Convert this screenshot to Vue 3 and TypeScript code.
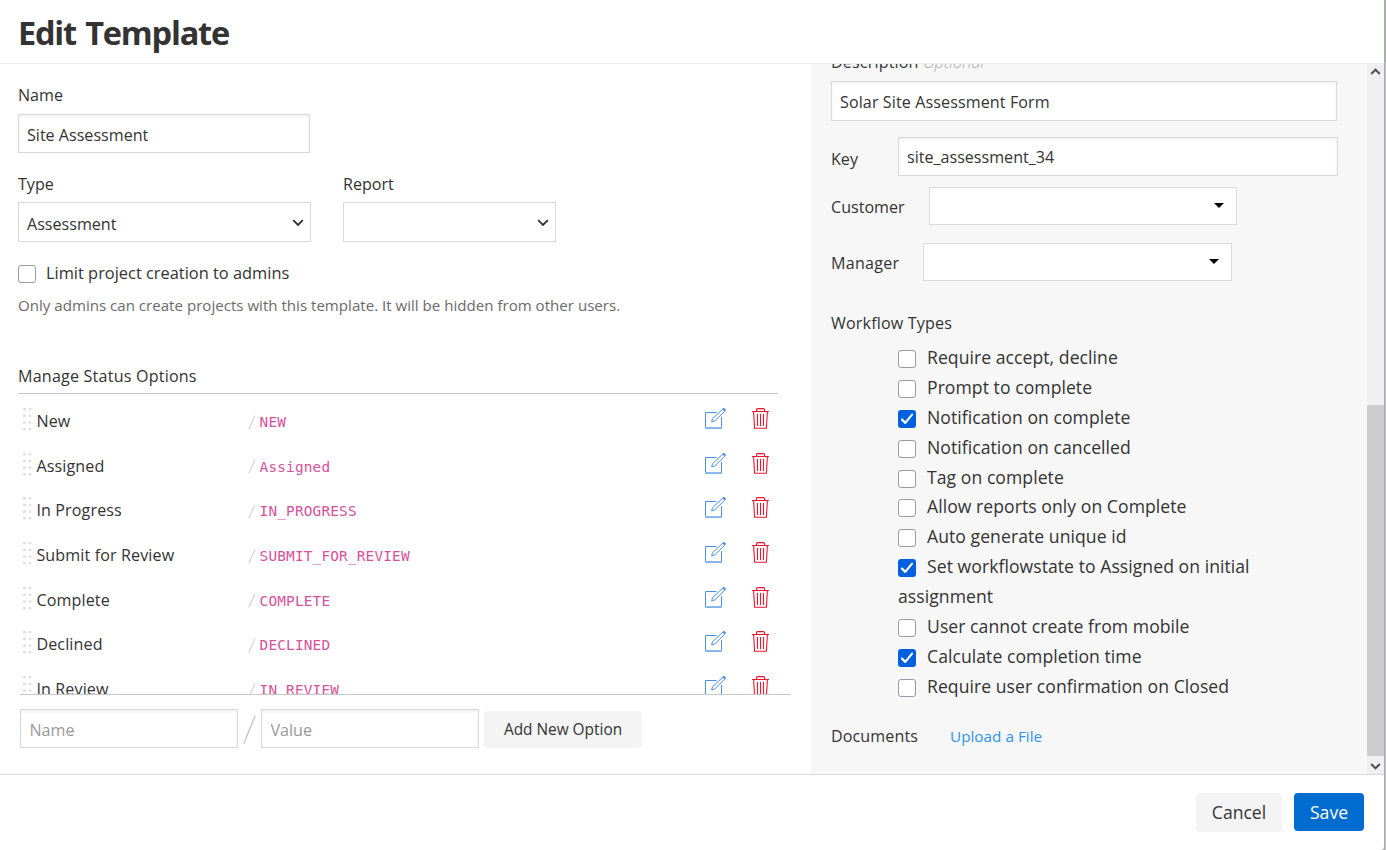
<script setup lang="ts">
import { ref } from 'vue'

interface StatusOption {
  label: string
  value: string
}

interface WorkflowType {
  label: string
  checked: boolean
}

const statuses = ref<StatusOption[]>([
  { label: 'New', value: 'NEW' },
  { label: 'Assigned', value: 'Assigned' },
  { label: 'In Progress', value: 'IN_PROGRESS' },
  { label: 'Submit for Review', value: 'SUBMIT_FOR_REVIEW' },
  { label: 'Complete', value: 'COMPLETE' },
  { label: 'Declined', value: 'DECLINED' },
  { label: 'In Review', value: 'IN_REVIEW' },
])

const workflowTypes = ref<WorkflowType[]>([
  { label: 'Require accept, decline', checked: false },
  { label: 'Prompt to complete', checked: false },
  { label: 'Notification on complete', checked: true },
  { label: 'Notification on cancelled', checked: false },
  { label: 'Tag on complete', checked: false },
  { label: 'Allow reports only on Complete', checked: false },
  { label: 'Auto generate unique id', checked: false },
  { label: 'Set workflowstate to Assigned on initial assignment', checked: true },
  { label: 'User cannot create from mobile', checked: false },
  { label: 'Calculate completion time', checked: true },
  { label: 'Require user confirmation on Closed', checked: false },
])

const name = ref('Site Assessment')
const description = ref('Solar Site Assessment Form')
const templateKey = ref('site_assessment_34')
const adminsOnly = ref(false)
</script>

<template>
  <div class="screen">
    <div class="dialog">
      <header class="head"><h1>Edit Template</h1></header>

      <div class="body">
        <section class="main">
          <label class="lbl name-lbl">Name</label>
          <input v-model="name" class="field name-field" type="text" />

          <div class="selects">
            <div class="col type-col">
              <label class="lbl">Type</label>
              <div class="select">
                <span>Assessment</span>
                <svg width="12" height="8" viewBox="0 0 12 8"><path d="M1.2 1.2 6 6l4.8-4.8" /></svg>
              </div>
            </div>
            <div class="col report-col">
              <label class="lbl">Report</label>
              <div class="select">
                <span></span>
                <svg width="12" height="8" viewBox="0 0 12 8"><path d="M1.2 1.2 6 6l4.8-4.8" /></svg>
              </div>
            </div>
          </div>

          <label class="limit">
            <input v-model="adminsOnly" type="checkbox" class="sr" />
            <span class="box"></span>
            <span class="limit-text">Limit project creation to admins</span>
          </label>
          <p class="hint">Only admins can create projects with this template. It will be hidden from other users.</p>

          <h2 class="lbl manage">Manage Status Options</h2>
          <div class="list">
            <div v-for="s in statuses" :key="s.value" class="row">
              <svg class="grip" width="9" height="23" viewBox="0 0 9 23">
                <g v-for="y in [0, 6.7, 13.4, 20]" :key="y">
                  <rect x="0" :y="y" width="3" height="2.4" />
                  <rect x="5.7" :y="y" width="2.6" height="2.4" />
                </g>
              </svg>
              <span class="row-name">{{ s.label }}</span>
              <svg class="slash" width="8" height="15" viewBox="0 0 8 15"><path d="M.8 14.5 7 .5" /></svg>
              <code>{{ s.value }}</code>
              <svg class="edit" width="21" height="21" viewBox="0 0 21 21">
                <path d="M11.5 4.5H.5v15.8h16V9.2" />
                <path class="base" d="M0 19.8h17" />
                <path class="pencil" d="M6.6 13.9l1-3.3L17.9 1l2 2L9.8 12.9z" />
                <path class="tip" d="M17.9.9l1-.7 1.6 1.6-.9 1.2z" />
              </svg>
              <svg class="trash" width="17" height="21" viewBox="0 0 17 21">
                <path d="M0 3.5h17M4.5 3.3V1.6Q4.5.6 5.5.6h6q1 0 1 1v1.7M1.6 3.5l1 16.8h11.8l1-16.8M5.5 6v12M8.5 6v12M11.5 6v12" />
              </svg>
            </div>
          </div>

          <div class="adder">
            <input class="field" type="text" placeholder="Name" />
            <svg class="big-slash" width="13" height="29" viewBox="0 0 13 29"><path d="M.8 28.5 12.2.5" /></svg>
            <input class="field" type="text" placeholder="Value" />
            <button class="btn add">Add New Option</button>
          </div>
        </section>

        <aside class="side">
          <div class="pane">
            <label class="lbl desc-lbl">Description <em>Optional</em></label>
            <input v-model="description" class="field desc-field" type="text" />
            <div class="pair key">
              <label class="lbl">Key</label>
              <input v-model="templateKey" class="field" type="text" />
            </div>
            <div class="pair customer">
              <label class="lbl">Customer</label>
              <div class="combo"><i></i></div>
            </div>
            <div class="pair manager">
              <label class="lbl">Manager</label>
              <div class="combo"><i></i></div>
            </div>
            <h2 class="lbl wf-title">Workflow Types</h2>
            <ul class="wf">
              <li v-for="w in workflowTypes" :key="w.label">
                <label>
                  <input v-model="w.checked" type="checkbox" class="sr" />
                  <span class="box" :class="{ on: w.checked }">
                    <svg v-if="w.checked" width="18" height="18" viewBox="0 0 18 18"><path d="M4 9.6l3.3 3.3L14 4.6" /></svg>
                  </span>{{ w.label }}
                </label>
              </li>
            </ul>
            <div class="docs">
              <span class="lbl">Documents</span>
              <a>Upload a File</a>
            </div>
          </div>
          <div class="scrollbar">
            <svg width="11" height="7" viewBox="0 0 11 7"><path d="M1.2 6 5.5 1.7 9.8 6" /></svg>
            <div class="thumb"></div>
            <svg width="11" height="7" viewBox="0 0 11 7"><path d="M1.2 1 5.5 5.3 9.8 1" /></svg>
          </div>
        </aside>
      </div>

      <footer class="foot">
        <button class="btn cancel">Cancel</button>
        <button class="btn save">Save</button>
      </footer>
    </div>
    <div class="backdrop"></div>
  </div>
</template>

<style>
html,
body {
  overflow: hidden;
}
</style>

<style scoped>
* {
  box-sizing: border-box;
}
.screen {
  display: flex;
  width: 1386px;
  height: 850px;
  background: #c0c0c0;
  color: #333;
  font-family: 'Open Sans', 'Noto Sans', sans-serif;
  font-size: 16.1px;
  line-height: 24px;
}
.dialog {
  width: 1384px;
  height: 850px;
  display: flex;
  flex-direction: column;
  background: #fff;
  border-bottom-right-radius: 4px;
}
.backdrop {
  width: 2px;
  height: 850px;
  border-left: 1px solid #ababab;
  background: linear-gradient(#a5bba9 62px, #c2c2c4 62px);
}
.head {
  height: 64px;
  flex: none;
  padding: 11px 0 0 18px;
  border-bottom: 1px solid #eee;
}
h1 {
  margin: 0;
  font-size: 32.5px;
  font-weight: 700;
  line-height: 44px;
  letter-spacing: -1.2px;
  word-spacing: 2px;
}
.body {
  display: flex;
  height: 710px;
  flex: none;
}
.main {
  width: 811px;
  padding: 19px 0 0 18px;
}
.lbl {
  display: block;
  margin: 0;
  font-size: 16.1px;
  font-weight: 400;
  line-height: 24px;
  white-space: nowrap;
}
.field {
  display: block;
  height: 39px;
  margin: 0;
  padding: 3px 8px 0;
  border: 1px solid #d9d9d9;
  border-radius: 0;
  background: #fff;
  box-shadow: inset 0 2px 3px rgba(0, 0, 0, 0.06);
  color: #333;
  font-family: inherit;
  font-size: 16.1px;
  outline: none;
}
.field::placeholder {
  color: #999;
  opacity: 1;
}
.name-field {
  width: 292px;
  margin-top: 7px;
}
.selects {
  display: flex;
  gap: 32px;
  margin-top: 19px;
}
.type-col {
  width: 293px;
}
.report-col {
  width: 213px;
}
.select {
  display: flex;
  align-items: center;
  justify-content: space-between;
  height: 40px;
  margin-top: 6px;
  padding: 3px 6px 0 8px;
  border: 1px solid #d9d9d9;
  background: #fff;
}
.select svg {
  margin-top: -2px;
}
.select path {
  fill: none;
  stroke: #333;
  stroke-width: 1.9;
}
.limit {
  display: flex;
  margin-top: 19px;
}
.limit .box {
  margin: 4.3px 0 -4.3px;
}
.limit-text {
  margin-left: 10px;
  font-size: 16.4px;
}
.sr {
  display: none;
}
.box {
  display: inline-block;
  width: 18px;
  height: 18px;
  border: 1px solid #9a99a6;
  border-radius: 3px;
  background: #fff;
}
.box.on {
  border: 0;
  background: #0060df;
}
.box svg {
  display: block;
}
.box path {
  fill: none;
  stroke: #fff;
  stroke-width: 2.2;
  stroke-linecap: round;
  stroke-linejoin: round;
}
.hint {
  margin: 8px 0 0;
  color: #6a6a6a;
  font-size: 15.1px;
  line-height: 24px;
  white-space: nowrap;
}
.manage {
  width: 760px;
  height: 30px;
  margin-top: 47px;
  border-bottom: 1px solid #c8c8c8;
  letter-spacing: 0.2px;
}
.list {
  width: 771px;
  height: 301px;
  margin-left: 2px;
  padding-top: 2.3px;
  overflow: hidden;
  border-bottom: 1px solid #c8c8c8;
}
.row {
  display: flex;
  align-items: center;
  height: 44.67px;
}
.grip {
  flex: none;
  margin: 2px 5px 0 3px;
  fill: #e0e0e0;
}
.row-name {
  width: 212px;
  margin-left: -0.6px;
  padding-top: 5px;
  letter-spacing: 0.12px;
}
.slash,
.big-slash {
  flex: none;
  fill: none;
  stroke: #d4d4d4;
  stroke-width: 1.2;
}
.slash {
  margin: 7px 0 0 -0.7px;
}
code {
  width: 445.3px;
  margin-left: 3.9px;
  padding-top: 7px;
  color: #d6519c;
  font-family: 'DejaVu Sans Mono', monospace;
  font-size: 14.4px;
  letter-spacing: 0.17px;
}
.edit,
.trash {
  flex: none;
  fill: none;
}
.edit {
  stroke: #4a90e2;
  stroke-width: 1;
}
.edit .base {
  stroke: #8fbbee;
  stroke-width: 1.6;
}
.edit .tip {
  fill: #4a90e2;
}
.trash {
  margin-left: 26px;
  stroke: #f0142f;
  stroke-width: 1.1;
}
.adder {
  display: flex;
  align-items: center;
  margin: 14px 0 0 2px;
}
.adder .field {
  width: 218px;
  padding-left: 8.5px;
}
.big-slash {
  margin: 2px 5px 0;
  stroke: #c8c8c8;
  stroke-width: 1.5;
}
.btn {
  height: 38px;
  margin: 0;
  padding: 0;
  border: 0;
  border-radius: 4px;
  background: #f4f4f4;
  color: #333;
  font-family: inherit;
  font-size: 17.6px;
}
.btn.add {
  width: 158px;
  height: 37px;
  margin: 2px 0 0 5px;
  padding-bottom: 1px;
  font-size: 15.4px;
}
.side {
  display: flex;
  width: 573px;
  background: #f7f7f7;
}
.pane {
  width: 556px;
  padding-left: 20px;
  overflow: hidden;
}
.desc-lbl {
  margin-top: -14px;
  letter-spacing: 0.15px;
}
.desc-lbl em {
  color: #aaa;
  font-weight: 300;
}
.desc-field {
  width: 506px;
  height: 40px;
  margin-top: 7px;
  padding-top: 2px;
  letter-spacing: 0.1px;
}
.pair {
  display: flex;
}
.key {
  margin-top: 16px;
}
.key .lbl {
  width: 67px;
  margin-top: 10px;
}
.key .field {
  width: 440px;
  padding-top: 1px;
}
.customer {
  margin-top: 11px;
}
.customer .lbl {
  width: 98px;
  margin-top: 8px;
}
.manager {
  margin-top: 18px;
}
.manager .lbl {
  width: 92px;
  margin-top: 8px;
  letter-spacing: 0.25px;
}
.combo {
  display: flex;
  align-items: center;
  justify-content: flex-end;
  width: 308px;
  height: 38px;
  padding-right: 12px;
  border: 1px solid #d9d9d9;
  background: #fff;
}
.manager .combo {
  width: 309px;
}
.combo i {
  border: 5px solid transparent;
  border-top-color: #000;
  border-bottom: 0;
  margin-top: -1px;
}
.wf-title {
  margin-top: 30px;
  letter-spacing: 0.15px;
}
.wf {
  width: 410px;
  margin: 8px 0 0 67px;
  padding: 0;
  list-style: none;
  font-size: 17.6px;
  line-height: 29.87px;
  letter-spacing: 0.05px;
}
.wf .box {
  margin-right: 11px;
  vertical-align: -4px;
}
.docs {
  display: flex;
  margin-top: 22.6px;
}
.docs .lbl {
  width: 119px;
  letter-spacing: 0.1px;
}
.docs a {
  color: #2f93f0;
  font-size: 15.3px;
}
.scrollbar {
  display: flex;
  flex-direction: column;
  align-items: center;
  width: 17px;
  padding: 4px 0 4px;
  background: #f0f0f0;
}
.scrollbar svg {
  flex: none;
}
.scrollbar path {
  fill: none;
  stroke: #505050;
  stroke-width: 2;
}
.thumb {
  width: 17px;
  height: 351px;
  margin: 330px 0 7px;
  background: #cdcdcd;
}
.foot {
  display: flex;
  height: 76px;
  padding: 18px 20px 0 0;
  justify-content: flex-end;
  gap: 12px;
  border-top: 1px solid #d9d9d9;
}
.cancel {
  width: 86px;
  height: 39px;
  padding-bottom: 2px;
}
.btn.save {
  width: 70px;
  background: #006ccf;
  color: #fff;
}
</style>
